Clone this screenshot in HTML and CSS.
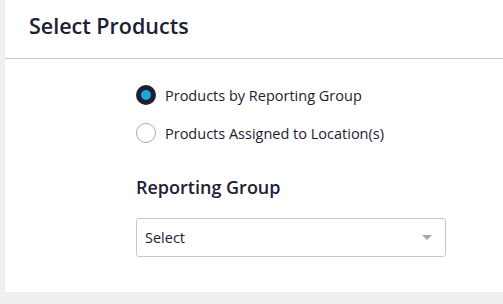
FILE: index.html
```html
<!DOCTYPE html>
<html lang="en">
<head>
    <meta charset="UTF-8">
    <title>Select Products</title>
    <link rel="stylesheet" href="styles.css">
</head>
<body>
    <div class="card">
        <div class="card-header">
            <h1>Select Products</h1>
        </div>
        <div class="card-body">
            <label class="radio">
                <input type="radio" name="mode" checked>
                <span class="dot"></span>
                Products by Reporting Group
            </label>
            <label class="radio">
                <input type="radio" name="mode">
                <span class="dot"></span>
                Products Assigned to Location(s)
            </label>

            <h2>Reporting Group</h2>
            <div class="select">
                <span>Select</span>
                <span class="caret"></span>
            </div>
        </div>
    </div>
</body>
</html>
```

FILE: styles.css
```css
:root {
    --navy: #1d2035;
    --cyan: #1aa9d9;
    --line: #c8c6da;
    --bg: #efefef;
}

body {
    margin: 0;
    padding: 0 0 12px 5px;
    background-color: var(--bg);
    font-family: 'Open Sans', Arial, sans-serif;
    color: var(--navy);
}

.card {
    background: white;
    height: 292px;
}

.card-header {
    height: 59px;
    box-sizing: border-box;
    border-bottom: 1px solid var(--line);
    padding: 12px 0 0 24px;
}

h1 {
    margin: 0;
    font-size: 21.5px;
    line-height: 28px;
    font-weight: 600;
}

.card-body {
    padding: 26px 0 0 131px;
}

.radio {
    display: flex;
    align-items: center;
    gap: 9px;
    height: 20px;
    margin-bottom: 18px;
    font-size: 14.5px;
    cursor: pointer;
}

.radio input {
    display: none;
}

.dot {
    width: 20px;
    height: 20px;
    box-sizing: border-box;
    border-radius: 50%;
    border: 1px solid #a9a7b8;
}

.radio input:checked + .dot {
    border: 5px solid var(--navy);
    background: var(--cyan);
}

h2 {
    margin: 32px 0 0;
    font-size: 18px;
    font-weight: 600;
}

.select {
    margin-top: 19px;
    width: 310px;
    height: 39px;
    box-sizing: border-box;
    border: 1px solid var(--line);
    border-radius: 3px;
    display: flex;
    align-items: center;
    justify-content: space-between;
    padding: 0 13px 0 8px;
    font-size: 14.5px;
}

.caret {
    width: 0;
    height: 0;
    border-left: 5px solid transparent;
    border-right: 5px solid transparent;
    border-top: 5px solid #a7a5bb;
}
```
